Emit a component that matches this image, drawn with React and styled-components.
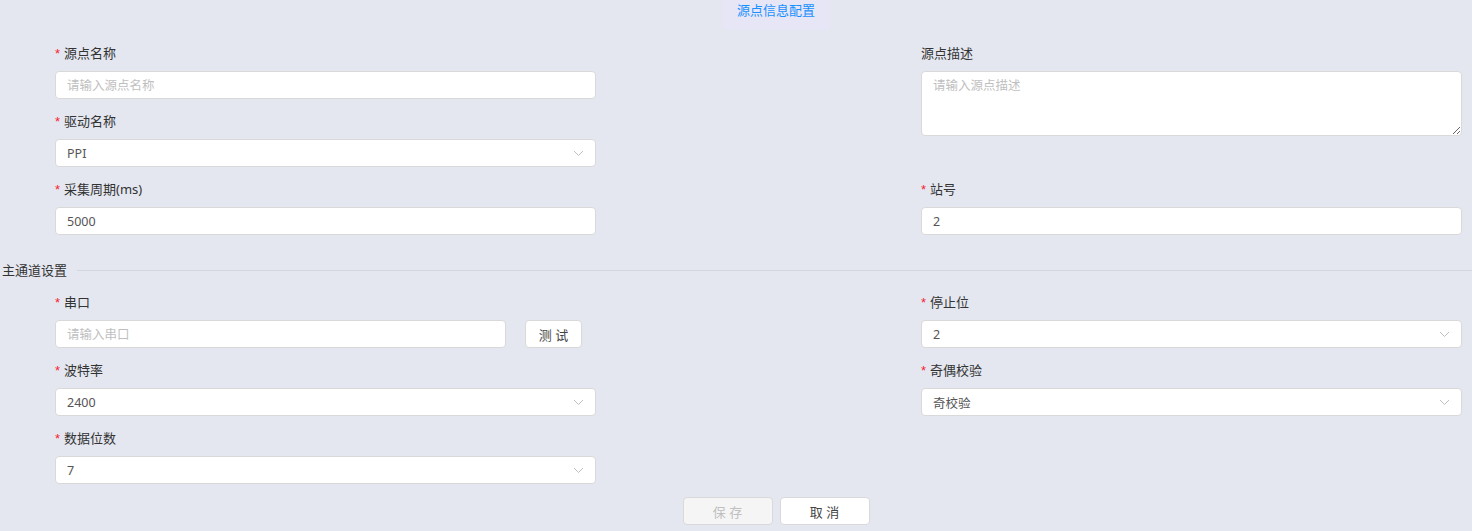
import React from "react";
import styled, { createGlobalStyle } from "styled-components";

const GlobalStyle = createGlobalStyle`
  body {
    margin: 0;
    background: #e4e7f0;
    font-family: "Noto Sans", "Noto Sans CJK SC", sans-serif;
    color: #333;
  }
`;

const Page = styled.div`
  width: 1472px;
  height: 531px;
  overflow: hidden;
  background: #e4e7f0;
`;

const TitleBar = styled.div`
  display: flex;
  justify-content: center;
  padding-left: 80px;
  height: 30px;
`;

const TitleTab = styled.div`
  width: 107px;
  height: 30px;
  background: #e6e6f7;
  color: #1890ff;
  font-size: 13px;
  line-height: 20px;
  text-align: center;
`;

const Grid = styled.div`
  display: grid;
  grid-template-columns: 541px 541px;
  column-gap: 325px;
  row-gap: 12px;
  padding-left: 55px;
  margin-top: ${(p) => p.$top}px;
`;

const Item = styled.div`
  display: flex;
  flex-direction: column;
  gap: 8px;
  grid-column: ${(p) => p.$col};
  grid-row: ${(p) => p.$row};
`;

const Label = styled.div`
  height: 20px;
  font-size: 13px;
  line-height: 20px;
  color: #333;
  white-space: nowrap;
`;

const Star = styled.span`
  color: #f5222d;
  margin-right: 4px;
  font-family: "Liberation Sans", sans-serif;
`;

const Input = styled.input`
  box-sizing: border-box;
  width: ${(p) => p.$w || "100%"};
  height: 28px;
  padding: 0 11px;
  border: 1px solid #d9d9d9;
  border-radius: 4px;
  background: #fff;
  font-family: inherit;
  font-size: 12.5px;
  color: #555;
  outline: none;
  &::placeholder {
    color: #bfbfbf;
  }
`;

const TextArea = styled.textarea`
  box-sizing: border-box;
  width: 100%;
  height: 65px;
  padding: 4px 11px;
  border: 1px solid #d9d9d9;
  border-radius: 4px;
  background: #fff;
  font-family: inherit;
  font-size: 12.5px;
  line-height: 20px;
  resize: vertical;
  outline: none;
  &::placeholder {
    color: #bfbfbf;
  }
`;

const Select = styled.div`
  box-sizing: border-box;
  height: 28px;
  padding: 0 11px;
  border: 1px solid #d9d9d9;
  border-radius: 4px;
  background: #fff;
  display: flex;
  align-items: center;
  justify-content: space-between;
  font-size: 12.5px;
  color: #555;
`;

const Row = styled.div`
  display: flex;
  align-items: center;
  gap: 19px;
  height: 28px;
`;

const Button = styled.button`
  box-sizing: border-box;
  width: ${(p) => p.$w}px;
  height: 28px;
  border: 1px solid #d9d9d9;
  border-radius: 4px;
  background: ${(p) => (p.disabled ? "#f5f5f5" : "#fff")};
  color: ${(p) => (p.disabled ? "#bfbfbf" : "#444")};
  font-family: inherit;
  font-size: 13px;
  padding: 0;
  cursor: ${(p) => (p.disabled ? "not-allowed" : "pointer")};
`;

const Divider = styled.div`
  display: flex;
  align-items: center;
  gap: 10px;
  margin-top: 25px;
  padding-left: 2px;
  font-size: 13px;
  line-height: 20px;
  &::after {
    content: "";
    flex: 1;
    height: 1px;
    background: #d3d6df;
  }
`;

const Footer = styled.div`
  display: flex;
  justify-content: center;
  gap: 7px;
  padding-left: 80px;
  margin-top: 13px;
`;

const Chevron = () => (
  <svg width="11" height="7" viewBox="0 0 11 7">
    <polyline points="1,1 5.5,5.5 10,1" fill="none" stroke="#bfbfbf" strokeWidth="1" />
  </svg>
);

const Field = ({ label, required, col, row, children }) => (
  <Item $col={col} $row={row}>
    <Label>
      {required && <Star>*</Star>}
      {label}
    </Label>
    {children}
  </Item>
);

const Dropdown = ({ value }) => (
  <Select>
    <span>{value}</span>
    <Chevron />
  </Select>
);

const App = () => (
  <Page>
    <GlobalStyle />
    <TitleBar>
      <TitleTab>源点信息配置</TitleTab>
    </TitleBar>

    <Grid $top={13}>
      <Field label="源点名称" required col={1} row={1}>
        <Input placeholder="请输入源点名称" />
      </Field>
      <Field label="源点描述" col={2} row="1 / span 2">
        <TextArea placeholder="请输入源点描述" />
      </Field>
      <Field label="驱动名称" required col={1} row={2}>
        <Dropdown value="PPI" />
      </Field>
      <Field label="采集周期(ms)" required col={1} row={3}>
        <Input defaultValue="5000" />
      </Field>
      <Field label="站号" required col={2} row={3}>
        <Input defaultValue="2" />
      </Field>
    </Grid>

    <Divider>主通道设置</Divider>

    <Grid $top={12}>
      <Field label="串口" required col={1} row={1}>
        <Row>
          <Input placeholder="请输入串口" $w="451px" />
          <Button $w={57}>测 试</Button>
        </Row>
      </Field>
      <Field label="停止位" required col={2} row={1}>
        <Dropdown value="2" />
      </Field>
      <Field label="波特率" required col={1} row={2}>
        <Dropdown value="2400" />
      </Field>
      <Field label="奇偶校验" required col={2} row={2}>
        <Dropdown value="奇校验" />
      </Field>
      <Field label="数据位数" required col={1} row={3}>
        <Dropdown value="7" />
      </Field>
    </Grid>

    <Footer>
      <Button $w={90} disabled>
        保 存
      </Button>
      <Button $w={90}>取 消</Button>
    </Footer>
  </Page>
);

export default App;
